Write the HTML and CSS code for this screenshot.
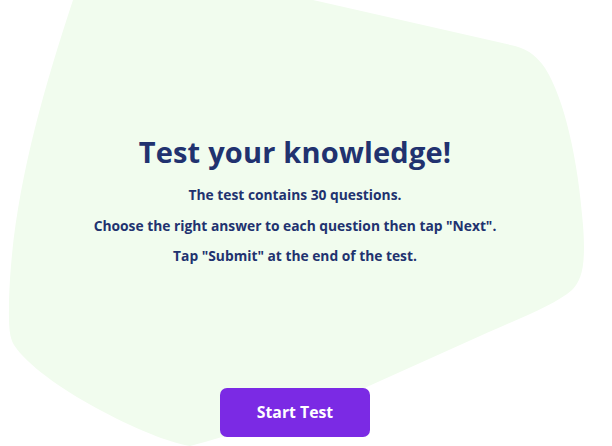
FILE: index.html
```html
<!DOCTYPE html>
<html lang="en">
<head>
<meta charset="utf-8">
<title>Test your knowledge</title>
<link rel="stylesheet" href="styles.css">
</head>
<body>
<div class="page">
  <svg class="blob" viewBox="0 0 612 446" width="612" height="446" aria-hidden="true">
    <path d="M73,0 L313,0 L515,46 C530,50 538,58 545,68 C565,100 578,160 583,225 C586,265 582,280 572,290 C555,305 520,318 480,336 L360,390 C300,415 240,432 190,446 C150,440 40,385 14,345 C8,335 9,320 9,300 C12,200 40,100 73,0 Z" fill="#f1fcee"/>
  </svg>
  <main class="content">
    <h1 class="title">Test your knowledge!</h1>
    <div class="info">
      <p class="line">The test contains 30 questions.</p>
      <p class="line">Choose the right answer to each question then tap "Next".</p>
      <p class="line">Tap "Submit" at the end of the test.</p>
    </div>
    <button class="start" type="button">Start Test</button>
  </main>
</div>
</body>
</html>
```

FILE: styles.css
```css
html, body {
  margin: 0;
  padding: 0;
  background: #ffffff;
}

.page {
  position: relative;
  width: 612px;
  height: 446px;
  overflow: hidden;
  font-family: "Open Sans", "Noto Sans", sans-serif;
}

.blob {
  position: absolute;
  left: 0;
  top: 0;
  display: block;
}

.content {
  position: relative;
  width: 590px;
  padding-top: 134px;
  display: flex;
  flex-direction: column;
  align-items: center;
  text-align: center;
  color: #21326f;
}

.title {
  margin: 0;
  font-size: 29px;
  line-height: 36px;
  font-weight: 700;
  letter-spacing: 0.2px;
}

.info {
  margin-top: 10px;
}

.line {
  margin: 0;
  font-size: 13.8px;
  line-height: 30.5px;
  font-weight: 700;
}

.start {
  margin-top: 116px;
  width: 150px;
  height: 49px;
  border: none;
  border-radius: 7px;
  background: #7b2ae4;
  color: #ffffff;
  font-family: inherit;
  font-size: 15.8px;
  font-weight: 700;
  cursor: pointer;
}
```
